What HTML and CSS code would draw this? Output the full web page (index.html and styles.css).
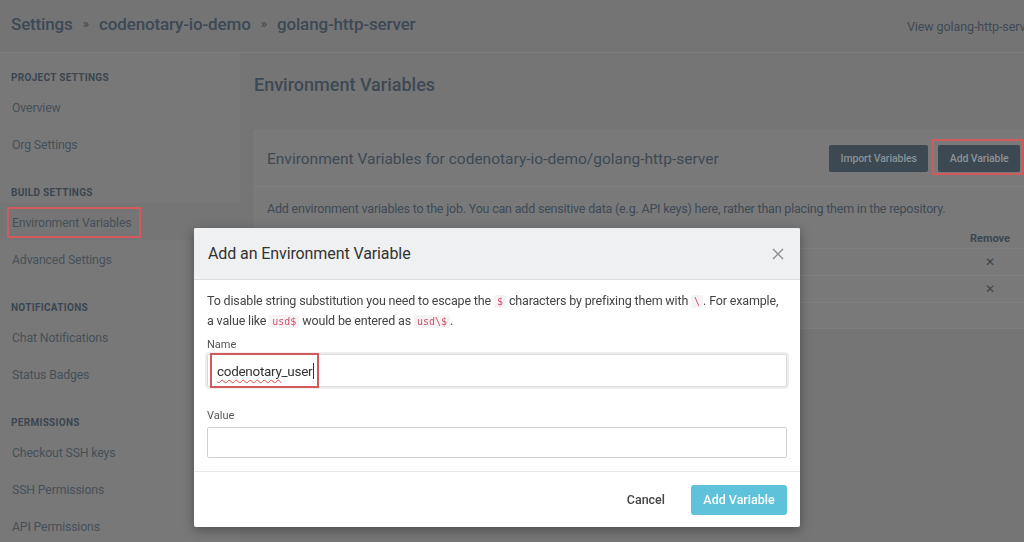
FILE: index.html
```html
<!DOCTYPE html>
<html lang="en">
<head>
<meta charset="utf-8">
<title>Environment Variables</title>
<link rel="stylesheet" href="styles.css">
</head>
<body>
<div class="app">
  <header class="topbar">
    <h1 class="crumbs">Settings <span class="sep">»</span> codenotary-io-demo <span class="sep">»</span> golang-http-server</h1>
    <a class="view-link">View golang-http-server</a>
  </header>
  <div class="layout">
    <nav class="sidebar">
      <div class="nav-section">
        <div class="nav-head">Project Settings</div>
        <div class="nav-item">Overview</div>
        <div class="nav-item">Org Settings</div>
      </div>
      <div class="nav-section">
        <div class="nav-head">Build Settings</div>
        <div class="nav-item active"><span class="annot annot-nav">Environment Variables</span></div>
        <div class="nav-item">Advanced Settings</div>
      </div>
      <div class="nav-section">
        <div class="nav-head">Notifications</div>
        <div class="nav-item">Chat Notifications</div>
        <div class="nav-item">Status Badges</div>
      </div>
      <div class="nav-section">
        <div class="nav-head">Permissions</div>
        <div class="nav-item">Checkout SSH keys</div>
        <div class="nav-item">SSH Permissions</div>
        <div class="nav-item">API Permissions</div>
      </div>
    </nav>
    <main class="content">
      <h2 class="page-title">Environment Variables</h2>
      <section class="card">
        <div class="card-head">
          <h3 class="card-title">Environment Variables for codenotary-io-demo/golang-http-server</h3>
          <div class="card-actions">
            <button class="btn-dark">Import Variables</button>
            <span class="annot annot-btn"><button class="btn-dark">Add Variable</button></span>
          </div>
        </div>
        <div class="card-body">
          <p class="card-text">Add environment variables to the job. You can add sensitive data (e.g. API keys) here, rather than placing them in the repository.</p>
          <div class="env-table">
            <div class="env-row env-head"><span class="c-name"></span><span class="c-value"></span><span class="c-remove">Remove</span></div>
            <div class="env-row"><span class="c-name"></span><span class="c-value"></span><span class="c-remove x">✕</span></div>
            <div class="env-row"><span class="c-name"></span><span class="c-value"></span><span class="c-remove x">✕</span></div>
            <div class="env-row env-last"></div>
          </div>
        </div>
      </section>
    </main>
  </div>
</div>

<div class="modal">
  <div class="modal-head">
    <h4 class="modal-title">Add an Environment Variable</h4>
    <svg class="close" width="12" height="12" viewBox="0 0 12 12"><path d="M1 1L11 11M11 1L1 11" stroke="#8a8a8a" stroke-width="1.3" fill="none"/></svg>
  </div>
  <div class="modal-body">
    <p class="hint">To disable string substitution you need to escape the <code>$</code> characters by prefixing them with <code>\</code>. For example, a value like <code>usd$</code> would be entered as <code>usd\$</code>.</p>
    <label class="field-label">Name</label>
    <div class="input focus"><span class="annot annot-input"><span class="typed"><span class="misspelled">codenotary</span>_user</span><span class="caret"></span></span></div>
    <label class="field-label value-label">Value</label>
    <div class="input"></div>
  </div>
  <div class="modal-foot">
    <button class="btn-cancel">Cancel</button>
    <button class="btn-primary">Add Variable</button>
  </div>
</div>
</body>
</html>
```

FILE: styles.css
```css
* { box-sizing: border-box; }
html, body { margin: 0; padding: 0; }
body {
  width: 1024px;
  height: 542px;
  overflow: hidden;
  background: #757575;
  font-family: Roboto, "Liberation Sans", Arial, sans-serif;
  color: #3e4a56;
}
.app { width: 1050px; }

.topbar {
  height: 53px;
  background: #747474;
  border-bottom: 1px solid #7d7d7d;
  display: flex;
  align-items: center;
  justify-content: space-between;
  padding: 0 14px 5px 11px;
}
.crumbs {
  margin: 0;
  font-size: 17px;
  font-weight: 500;
  color: #3d4955;
  letter-spacing: -0.15px;
}
.crumbs .sep { font-size: 13px; margin: 0 6px; position: relative; top: -2px; }
.view-link { font-size: 12.5px; color: #3f4a55; white-space: nowrap; position: relative; top: 3px; letter-spacing: -0.1px; }

.layout { display: flex; height: 489px; }
.sidebar {
  width: 240px;
  flex: 0 0 240px;
  background: #787878;
  padding-top: 14px;
}
.nav-section + .nav-section { margin-top: 20px; }
.nav-head {
  height: 21px;
  padding-left: 11px;
  display: flex;
  align-items: center;
  font-size: 10px;
  font-weight: 700;
  text-transform: uppercase;
  letter-spacing: 0.3px;
  color: #3a4651;
}
.nav-item {
  height: 37px;
  padding-left: 12px;
  padding-top: 2px;
  display: flex;
  align-items: center;
  font-size: 12.3px;
  letter-spacing: -0.15px;
  color: #465059;
}
.nav-item.active { background: #757575; }

.annot { outline: 2px solid #d35a5c; }
.annot-nav { padding: 7px 8px 6px 3px; margin-left: -3px; }

.content { flex: 1; padding: 0 14px; }
.page-title {
  margin: 0;
  padding-top: 21px;
  height: 77px;
  font-size: 18px;
  font-weight: 500;
  color: #3d4955;
}
.card {
  background: #797979;
  border: 1px solid #7d7d7d;
}
.card-head {
  height: 56px;
  display: flex;
  align-items: center;
  justify-content: space-between;
  padding: 0 15px 0 12px;
  border-bottom: 1px solid #808080;
}
.card-title { margin: 0; font-size: 15.5px; font-weight: 400; color: #3d4955; letter-spacing: 0; }
.card-actions { display: flex; align-items: center; gap: 10px; }
.btn-dark {
  height: 27px;
  padding: 0 11.5px;
  border: 0;
  border-radius: 2px;
  background: #3c4852;
  color: #8b9399;
  font-family: inherit;
  font-size: 10.5px;
  font-weight: 500;
  letter-spacing: -0.1px;
}
.annot-btn { display: inline-flex; padding: 4px 1px 1px 4px; margin-top: -3px; margin-left: -4px; margin-right: -1px; }

.card-body { padding: 0 12px 12px; }
.card-text { margin: 13px 0 0; font-size: 12.5px; color: #3e4a56; line-height: 18px; letter-spacing: -0.2px; }
.env-table { margin-top: 11px; }
.env-row {
  height: 27px;
  display: flex;
  align-items: center;
  font-size: 12px;
  border-bottom: 1px solid #7f7f7f;
}
.env-head { height: 20px; font-weight: 700; font-size: 11px; color: #3b4752; }
.env-last { height: 13px; border-bottom: 0; }
.c-name { width: 260px; }
.c-value { flex: 1; }
.c-remove { width: 80px; text-align: center; padding-left: 14px; }
.c-remove.x { font-size: 12px; color: #3b4550; }

.modal {
  position: fixed;
  left: 194px;
  top: 228px;
  width: 606px;
  height: 299px;
  background: #fff;
  border-radius: 2px;
  box-shadow: 0 3px 12px rgba(0,0,0,0.35);
  display: flex;
  flex-direction: column;
  color: #444;
}
.modal-head {
  height: 52px;
  background: #eef0f2;
  border-bottom: 1px solid #dcdcdc;
  display: flex;
  align-items: center;
  justify-content: space-between;
  padding: 0 16px 0 14px;
  border-radius: 2px 2px 0 0;
}
.modal-title { margin: 0; font-size: 16px; font-weight: 400; color: #333; letter-spacing: -0.1px; }
.close { display: block; }

.modal-body { padding: 11px 13px 13px; border-bottom: 1px solid #e8e8e8; }
.hint { margin: 0; max-width: 578px; font-size: 12.5px; line-height: 19px; color: #444; letter-spacing: -0.16px; }
code {
  font-family: "DejaVu Sans Mono", "Liberation Mono", monospace;
  font-size: 10px;
  color: #d0506b;
  background: #f6f3f4;
  padding: 1px 3px;
  border-radius: 2px;
  letter-spacing: 0;
}
.field-label { display: block; margin-top: 7px; font-size: 11px; color: #555; line-height: 14px; }
.value-label { margin-top: 22px; }
.input {
  margin-top: 2px;
  height: 31px;
  border: 1px solid #d0d0d0;
  border-radius: 2px;
  display: flex;
  align-items: center;
}
.value-label + .input { margin-top: 4px; }
.input.focus { box-shadow: 0 0 0 2px #eeeeee; border-color: #dadada; height: 33px; }
.annot-input { display: inline-flex; align-items: center; height: 31px; margin-left: 4px; padding: 0 3px 0 5px; }
.typed { font-size: 13.5px; color: #333; letter-spacing: -0.3px; }
.misspelled { text-decoration: underline wavy #e04848; text-decoration-thickness: 1px; text-underline-offset: 3px; }
.caret { display: inline-block; width: 1px; height: 16px; background: #333; margin-left: 1px; }

.modal-foot {
  flex: 1;
  display: flex;
  align-items: center;
  justify-content: flex-end;
  padding: 0 13px 0;
  gap: 14px;
}
.btn-cancel {
  border: 0;
  background: transparent;
  font-family: inherit;
  font-size: 12.5px;
  font-weight: 500;
  color: #444;
  padding: 0 12px;
  height: 30px;
}
.btn-primary {
  height: 30px;
  width: 96px;
  border: 0;
  border-radius: 3px;
  background: #5ec2da;
  color: #fff;
  font-family: inherit;
  font-size: 12.5px;
  font-weight: 500;
}
```
